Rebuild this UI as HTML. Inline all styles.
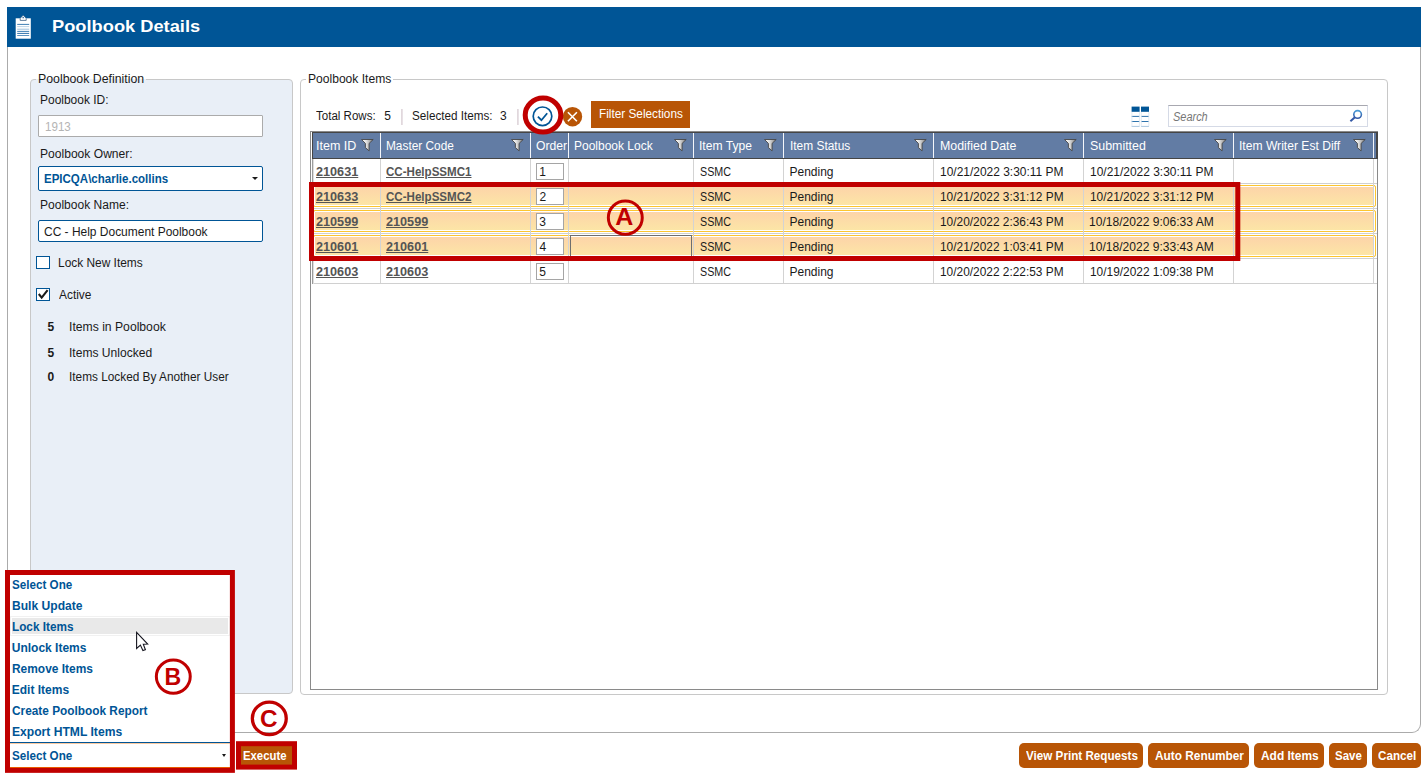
<!DOCTYPE html>
<html lang="en"><head><meta charset="utf-8"><title>Poolbook Details</title>
<style>
html,body{margin:0;padding:0;background:#fff;}
body{width:1428px;height:776px;position:relative;overflow:hidden;font-family:"Liberation Sans",sans-serif;font-size:12px;color:#1a1a1a;}
.a{position:absolute;box-sizing:border-box;}
svg{position:absolute;overflow:visible;}
.t{position:absolute;transform-origin:0 50%;white-space:nowrap;line-height:16px;font-size:12px;color:#1a1a1a;z-index:5;}
.title{font-size:17px;font-weight:bold;color:#fff;line-height:24px;}
.b{font-weight:bold;}
.bb{font-weight:bold;color:#005596;}
.w{color:#fff;}
.wb{color:#fff;font-weight:bold;}
.dis{color:#b4b4b4;}
.srch{font-style:italic;color:#767676;}
.lnk{font-weight:bold;color:#555;text-decoration:underline;text-underline-offset:1px;}
/* frame */
#hdr{left:7px;top:7px;width:1414px;height:40px;background:#005596;}
#frame{left:7px;top:47px;width:1414px;height:686px;border:1px solid #ababab;border-top:none;border-radius:0 0 9px 0;}
/* group boxes */
.gb{border:1px solid #c8c8c8;border-radius:4px;}
#gbL{left:30px;top:79px;width:263px;height:615px;background:#e9eff7;}
#gbR{left:300px;top:79px;width:1088px;height:616px;background:#fff;}
.patch{height:3px;top:78px;}
/* inputs */
.inp{background:#fff;border:1px solid #ababab;border-radius:1px;}
.inpb{background:#fff;border:1px solid #005596;border-radius:2px;}
.cb{width:14px;height:13px;background:#fff;border:1px solid #005596;}
.arrow{width:0;height:0;border-left:3px solid transparent;border-right:3px solid transparent;border-top:3px solid #1a1a1a;}
/* toolbar */
.sep{width:2px;background:linear-gradient(90deg,#ddd3d8,#ece6ea);}
#fbtn{left:591px;top:101px;width:99px;height:27px;background:#b85506;}
#search{left:1168px;top:105px;width:200px;height:22px;border:1px solid #d5dae6;border-top-color:#a8a8b0;background:#fff;}
/* grid */
#grid{left:310px;top:131px;width:1068px;height:559px;border:1px solid #8a8a8a;background:#fff;}
#ghead{left:312px;top:132px;width:1066px;height:27px;background:#627ca4;border:1px solid #454545;border-right-width:2px;}
.cdiv{top:133px;width:1px;height:25px;background:#f4f6fa;}
.row{left:313px;width:1064px;height:25px;border-bottom:1px solid #d0d0d0;}
.sel::before{content:'';position:absolute;box-sizing:border-box;left:0px;right:1px;top:1px;bottom:1px;border:1px solid #fcc52f;border-radius:2px;background:linear-gradient(#fdd3a9,#fce6a6);box-shadow:inset 0 0 0 1px #fff;}
.vline{top:159px;width:1px;height:124px;background:#d3d3d3;}
.oi{left:536px;width:28px;height:17px;background:#fff;border:1px solid #a5a5a5;}
/* bottom */
.btn{top:743px;height:25px;background:#b85506;border-radius:5px;}
#ddlist{left:8px;top:573px;width:225px;height:170px;background:#fff;border:1px solid #c0c0c0;}
#ddhl{left:10px;top:616px;width:220px;height:20px;background:#e9e9e9;border:1px solid #f1f1f1;box-shadow:inset 0 0 0 1px #fff;}
#ddcombo{left:8px;top:742px;width:225px;height:27px;background:#fff;border:1px solid #005596;}
#exe{left:240px;top:744px;width:53px;height:23px;background:#b85506;}
#anno{left:0;top:0;z-index:10;}

</style></head>
<body>
<div class="a" id="frame"></div>
<div class="a" id="hdr"></div>
<svg id="clip" style="left:14px;top:14px" width="20" height="27" viewBox="0 0 20 27">
  <path d="M6.3 6.2 V4.4 Q6.3 3.6 7.2 3.4 Q8.2 1.6 9.2 1.6 Q10.2 1.6 11.2 3.4 Q12.1 3.6 12.1 4.4 V6.2 Z" fill="#fff" stroke="#1d4f7c" stroke-width="0.6"/>
  <circle cx="9.2" cy="3.9" r="0.9" fill="#2a5f90"/>
  <rect x="1.7" y="4.3" width="15.1" height="20.4" fill="#fff"/>
  <path d="M6.2 4.3 V6.4 H12.2 V4.3" fill="none" stroke="#3a5f85" stroke-width="0.8"/>
  <g stroke="#3f7fb3" stroke-width="1">
    <line x1="3.2" y1="10.4" x2="15.2" y2="10.4"/>
    <line x1="3.2" y1="12.6" x2="15.2" y2="12.6" stroke="#bcd3e6"/>
    <line x1="3.2" y1="15.2" x2="15.2" y2="15.2" stroke="#9fc0db"/>
    <line x1="3.2" y1="17.4" x2="15.2" y2="17.4"/>
    <line x1="3.2" y1="19.4" x2="15.2" y2="19.4" stroke="#2f72aa"/>
    <line x1="3.2" y1="21.5" x2="15.2" y2="21.5" stroke="#5c93c0"/>
  </g>
</svg>

<!-- left group box -->
<div class="a gb" id="gbL"></div>
<div class="a patch" style="left:36px;width:110px;background:linear-gradient(#fff 0 1px,#e9eff7 1px)"></div>
<div class="a inp" style="left:38px;top:115px;width:225px;height:22px"></div>
<div class="a inpb" style="left:38px;top:166px;width:225px;height:25px"></div>
<div class="a arrow" style="left:252px;top:177px"></div>
<div class="a inpb" style="left:38px;top:220px;width:225px;height:22px"></div>
<div class="a cb" style="left:36px;top:256px"></div>
<div class="a cb" style="left:36px;top:288px"></div>
<svg style="left:36px;top:288px" width="14" height="13" viewBox="0 0 14 13"><path d="M2.8 6 L5.7 9.6 L11.6 2.2" fill="none" stroke="#1a1a1a" stroke-width="2.1"/></svg>

<!-- right group box -->
<div class="a gb" id="gbR"></div>
<div class="a patch" style="left:306px;width:87px;background:#fff"></div>
<div class="a sep" style="left:401px;top:109px;height:16px"></div>
<div class="a sep" style="left:517px;top:109px;height:16px"></div>
<svg style="left:530px;top:104px" width="56" height="26" viewBox="530 104 56 26">
  <circle cx="542.5" cy="116.3" r="9.3" fill="#fff" stroke="#005596" stroke-width="1.7"/>
  <path d="M537.9 116.7 L541.4 120.2 L547.2 113.2" fill="none" stroke="#005596" stroke-width="1.8"/>
  <circle cx="572.5" cy="116.7" r="9.7" fill="#b85506"/>
  <path d="M567.9 112.2 L576.9 121.3 M576.9 112.2 L567.9 121.3" fill="none" stroke="#fff" stroke-width="1.6"/>
</svg>
<div class="a" id="fbtn"></div>
<svg style="left:1131px;top:106px" width="19" height="21" viewBox="0 0 19 21">
  <rect x="0.6" y="0.6" width="8" height="5.2" fill="#005596"/>
  <rect x="10" y="0.6" width="8" height="5.2" fill="#005596"/>
  <g stroke="#2f74ad" stroke-width="1"><line x1="0.6" y1="10.4" x2="8.6" y2="10.4"/><line x1="10" y1="10.4" x2="18" y2="10.4"/><line x1="0.6" y1="15.5" x2="8.6" y2="15.5"/><line x1="10" y1="15.5" x2="18" y2="15.5"/></g>
  <g stroke="#a9c6df" stroke-width="1"><line x1="0.6" y1="20.4" x2="8.6" y2="20.4"/><line x1="10" y1="20.4" x2="18" y2="20.4"/></g>
  <g stroke="#dbe7f2" stroke-width="0.8" fill="none"><path d="M0.9 6 V20.4 M8.4 6 V20.4 M10.3 6 V20.4 M17.8 6 V20.4"/></g>
</svg>
<div class="a" id="search"></div>
<svg style="left:1348px;top:108px" width="16" height="16" viewBox="1348 108 16 16">
  <defs><linearGradient id="mg" x1="0" y1="0" x2="0" y2="1"><stop offset="0" stop-color="#4a9ad6"/><stop offset="1" stop-color="#3458a6"/></linearGradient></defs>
  <circle cx="1357.6" cy="114.4" r="3.8" fill="#fff" stroke="url(#mg)" stroke-width="1.6"/>
  <path d="M1354.9 117.2 L1350.4 121.3" stroke="#3458a6" stroke-width="1.9" fill="none"/>
</svg>

<!-- grid -->
<div class="a" id="grid"></div>
<div class="a" id="ghead"></div>
<div class="a cdiv" style="left:380px"></div>
<div class="a cdiv" style="left:530px"></div>
<div class="a cdiv" style="left:568px"></div>
<div class="a cdiv" style="left:693px"></div>
<div class="a cdiv" style="left:783px"></div>
<div class="a cdiv" style="left:933px"></div>
<div class="a cdiv" style="left:1083px"></div>
<div class="a cdiv" style="left:1233px"></div>
<div class="a cdiv" style="left:1373px"></div>
<div class="a row" style="top:159px"></div>
<div class="a row sel" style="top:184px"></div>
<div class="a row sel" style="top:209px"></div>
<div class="a row sel" style="top:234px"></div>
<div class="a row" style="top:259px"></div>
<div class="a vline" style="left:380px"></div>
<div class="a vline" style="left:530px"></div>
<div class="a vline" style="left:568px"></div>
<div class="a vline" style="left:693px"></div>
<div class="a vline" style="left:783px"></div>
<div class="a vline" style="left:933px"></div>
<div class="a vline" style="left:1083px"></div>
<div class="a vline" style="left:1233px"></div>
<div class="a vline" style="left:1373px"></div>
<div class="a oi" style="top:163px"></div>
<div class="a oi" style="top:188px"></div>
<div class="a oi" style="top:213px"></div>
<div class="a oi" style="top:238px"></div>
<div class="a oi" style="top:263px"></div>
<div class="a" style="left:312px;top:159px;width:1px;height:125px;background:#9c9c9c"></div>
<div class="a" style="left:313px;top:159px;width:1px;height:125px;background:#dedede"></div>
<div class="a" style="left:570px;top:235px;width:122px;height:23px;border:1px solid #6e6e6e;border-bottom:none"></div>
<svg width="0" height="0" style="left:0;top:0"><defs><linearGradient id="fg" x1="0" y1="0" x2="1" y2="0"><stop offset="0" stop-color="#fff"/><stop offset="0.4" stop-color="#e4e4e4"/><stop offset="1" stop-color="#7c7c7c"/></linearGradient></defs></svg>
<svg style="left:361px;top:139px" width="13" height="13" viewBox="0 0 13 13"><path d="M0.5 0.5 H12.2 L8.1 4.4 V11.9 L4.4 8.6 V4.4 Z" fill="url(#fg)" stroke="#454545" stroke-width="0.9" stroke-linejoin="miter"/></svg>
<svg style="left:511px;top:139px" width="13" height="13" viewBox="0 0 13 13"><path d="M0.5 0.5 H12.2 L8.1 4.4 V11.9 L4.4 8.6 V4.4 Z" fill="url(#fg)" stroke="#454545" stroke-width="0.9" stroke-linejoin="miter"/></svg>
<svg style="left:674px;top:139px" width="13" height="13" viewBox="0 0 13 13"><path d="M0.5 0.5 H12.2 L8.1 4.4 V11.9 L4.4 8.6 V4.4 Z" fill="url(#fg)" stroke="#454545" stroke-width="0.9" stroke-linejoin="miter"/></svg>
<svg style="left:764px;top:139px" width="13" height="13" viewBox="0 0 13 13"><path d="M0.5 0.5 H12.2 L8.1 4.4 V11.9 L4.4 8.6 V4.4 Z" fill="url(#fg)" stroke="#454545" stroke-width="0.9" stroke-linejoin="miter"/></svg>
<svg style="left:914px;top:139px" width="13" height="13" viewBox="0 0 13 13"><path d="M0.5 0.5 H12.2 L8.1 4.4 V11.9 L4.4 8.6 V4.4 Z" fill="url(#fg)" stroke="#454545" stroke-width="0.9" stroke-linejoin="miter"/></svg>
<svg style="left:1064px;top:139px" width="13" height="13" viewBox="0 0 13 13"><path d="M0.5 0.5 H12.2 L8.1 4.4 V11.9 L4.4 8.6 V4.4 Z" fill="url(#fg)" stroke="#454545" stroke-width="0.9" stroke-linejoin="miter"/></svg>
<svg style="left:1214px;top:139px" width="13" height="13" viewBox="0 0 13 13"><path d="M0.5 0.5 H12.2 L8.1 4.4 V11.9 L4.4 8.6 V4.4 Z" fill="url(#fg)" stroke="#454545" stroke-width="0.9" stroke-linejoin="miter"/></svg>
<svg style="left:1353px;top:139px" width="13" height="13" viewBox="0 0 13 13"><path d="M0.5 0.5 H12.2 L8.1 4.4 V11.9 L4.4 8.6 V4.4 Z" fill="url(#fg)" stroke="#454545" stroke-width="0.9" stroke-linejoin="miter"/></svg>
<!-- bottom -->
<div class="a btn" style="left:1019px;width:124px"></div>
<div class="a btn" style="left:1148px;width:101px"></div>
<div class="a btn" style="left:1254px;width:70px"></div>
<div class="a btn" style="left:1329px;width:38px"></div>
<div class="a btn" style="left:1372px;width:49px"></div>
<div class="a" id="ddlist"></div>
<div class="a" id="ddhl"></div>
<div class="a" id="ddcombo"></div>
<div class="a arrow" style="left:222px;top:754px;border-left-width:2.5px;border-right-width:2.5px"></div>
<div class="a" style="left:10px;top:743px;width:220px;height:1px;background:#f9c9a0"></div>
<div class="a" style="left:10px;top:767px;width:220px;height:1px;background:#f06a00"></div>
<div class="a" id="exe"></div>
<!-- annotations -->
<svg id="anno" width="1428" height="776" viewBox="0 0 1428 776">
  <g fill="none" stroke="#c00000">
    <ellipse cx="543" cy="115.1" rx="17.8" ry="17" stroke-width="5"/>
    <rect x="311.5" y="184.5" width="926.3" height="74" stroke-width="5"/>
    <ellipse cx="625.3" cy="217.65" rx="16.95" ry="16.6" stroke-width="3"/>
    <rect x="7.5" y="572.5" width="224.9" height="197.85" stroke-width="5"/>
    <ellipse cx="173.3" cy="676.6" rx="16.95" ry="16.6" stroke-width="3"/>
    <rect x="238.5" y="743.7" width="56" height="23.4" stroke-width="5"/>
    <ellipse cx="269.3" cy="718.4" rx="16.95" ry="16.3" stroke-width="3.3"/>
  </g>
  <g fill="#c00000" font-family="Liberation Sans, sans-serif" font-weight="bold" font-size="23.6px" text-anchor="middle">
    <text transform="translate(624.3 225.2) scale(1.06 1)">A</text>
    <text transform="translate(172.9 685) scale(0.98 1)">B</text>
    <text transform="translate(268.7 726.9) scale(1.03 1)">C</text>
  </g>
  <path d="M136.6 632.3 V648.5 L140.4 645.1 L142.9 650.6 L145.4 649.7 L143.3 644.3 L147.7 644 Z" fill="#fff" stroke="#15151f" stroke-width="1.1" stroke-linejoin="miter"/>
</svg>

<div id="texts">
<span class="t title" style="left:51.66px;top:15px;transform:scaleX(1.0743);">Poolbook Details</span>
<span class="t lg lgL" style="left:38.17px;top:71px;transform:scaleX(1.0270);">Poolbook Definition</span>
<span class="t " style="left:40.30px;top:92px;transform:scaleX(0.9978);">Poolbook ID:</span>
<span class="t dis" style="left:44.53px;top:119px;transform:scaleX(0.9663);">1913</span>
<span class="t " style="left:40.29px;top:146px;transform:scaleX(1.0067);">Poolbook Owner:</span>
<span class="t bb" style="left:43.78px;top:171px;transform:scaleX(0.9591);">EPICQA\charlie.collins</span>
<span class="t " style="left:40.30px;top:197px;transform:scaleX(1.0029);">Poolbook Name:</span>
<span class="t " style="left:44.00px;top:224px;transform:scaleX(0.9969);">CC - Help Document Poolbook</span>
<span class="t " style="left:57.91px;top:255px;transform:scaleX(0.9929);">Lock New Items</span>
<span class="t " style="left:58.90px;top:287px;transform:scaleX(0.9922);">Active</span>
<span class="t b" style="left:47.38px;top:319px;">5</span>
<span class="t " style="left:68.89px;top:319px;transform:scaleX(1.0143);">Items in Poolbook</span>
<span class="t b" style="left:47.38px;top:345px;">5</span>
<span class="t " style="left:68.89px;top:345px;transform:scaleX(1.0062);">Items Unlocked</span>
<span class="t b" style="left:47.38px;top:369px;">0</span>
<span class="t " style="left:68.91px;top:369px;transform:scaleX(0.9851);">Items Locked By Another User</span>
<span class="t lg lgR" style="left:308.29px;top:71px;transform:scaleX(1.0068);">Poolbook Items</span>
<span class="t " style="left:315.66px;top:108px;transform:scaleX(0.9613);">Total Rows:</span>
<span class="t " style="left:384.27px;top:108px;">5</span>
<span class="t " style="left:412.21px;top:108px;transform:scaleX(0.9748);">Selected Items:</span>
<span class="t " style="left:500.12px;top:108px;">3</span>
<span class="t w" style="left:598.52px;top:106px;transform:scaleX(0.9821);">Filter Selections</span>
<span class="t srch" style="left:1173.27px;top:109px;transform:scaleX(0.9128);">Search</span>
<span class="t w" style="left:315.76px;top:138px;transform:scaleX(1.0432);">Item ID</span>
<span class="t w" style="left:385.71px;top:138px;transform:scaleX(0.9874);">Master Code</span>
<span class="t w" style="left:536.09px;top:138px;transform:scaleX(1.0133);">Order</span>
<span class="t w" style="left:574.00px;top:138px;">Poolbook Lock</span>
<span class="t w" style="left:699.09px;top:138px;transform:scaleX(1.0078);">Item Type</span>
<span class="t w" style="left:789.51px;top:138px;transform:scaleX(0.9924);">Item Status</span>
<span class="t w" style="left:939.57px;top:138px;transform:scaleX(1.0317);">Modified Date</span>
<span class="t w" style="left:1089.78px;top:138px;transform:scaleX(1.0332);">Submitted</span>
<span class="t w" style="left:1239.39px;top:138px;transform:scaleX(1.0086);">Item Writer Est Diff</span>
<span class="t lnk" style="left:316.17px;top:164px;transform:scaleX(1.0548);">210631</span>
<span class="t lnk" style="left:386.22px;top:164px;transform:scaleX(0.9641);">CC-HelpSSMC1</span>
<span class="t " style="left:539.20px;top:164px;">1</span>
<span class="t " style="left:699.85px;top:164px;transform:scaleX(0.8948);">SSMC</span>
<span class="t " style="left:789.50px;top:164px;">Pending</span>
<span class="t " style="left:939.60px;top:164px;transform:scaleX(0.9967);">10/21/2022 3:30:11 PM</span>
<span class="t " style="left:1089.50px;top:164px;transform:scaleX(0.9967);">10/21/2022 3:30:11 PM</span>
<span class="t lnk" style="left:316.17px;top:189px;transform:scaleX(1.0548);">210633</span>
<span class="t lnk" style="left:386.22px;top:189px;transform:scaleX(0.9641);">CC-HelpSSMC2</span>
<span class="t " style="left:539.45px;top:189px;">2</span>
<span class="t " style="left:699.85px;top:189px;transform:scaleX(0.8948);">SSMC</span>
<span class="t " style="left:789.50px;top:189px;">Pending</span>
<span class="t " style="left:939.61px;top:189px;transform:scaleX(0.9906);">10/21/2022 3:31:12 PM</span>
<span class="t " style="left:1089.51px;top:189px;transform:scaleX(0.9906);">10/21/2022 3:31:12 PM</span>
<span class="t lnk" style="left:316.17px;top:214px;transform:scaleX(1.0548);">210599</span>
<span class="t lnk" style="left:386.17px;top:214px;transform:scaleX(1.0548);">210599</span>
<span class="t " style="left:539.33px;top:214px;">3</span>
<span class="t " style="left:699.85px;top:214px;transform:scaleX(0.8948);">SSMC</span>
<span class="t " style="left:789.50px;top:214px;">Pending</span>
<span class="t " style="left:939.61px;top:214px;transform:scaleX(0.9906);">10/20/2022 2:36:43 PM</span>
<span class="t " style="left:1089.49px;top:214px;transform:scaleX(1.0053);">10/18/2022 9:06:33 AM</span>
<span class="t lnk" style="left:316.17px;top:239px;transform:scaleX(1.0548);">210601</span>
<span class="t lnk" style="left:386.17px;top:239px;transform:scaleX(1.0548);">210601</span>
<span class="t " style="left:539.45px;top:239px;">4</span>
<span class="t " style="left:699.85px;top:239px;transform:scaleX(0.8948);">SSMC</span>
<span class="t " style="left:789.50px;top:239px;">Pending</span>
<span class="t " style="left:939.61px;top:239px;transform:scaleX(0.9906);">10/21/2022 1:03:41 PM</span>
<span class="t " style="left:1089.49px;top:239px;transform:scaleX(1.0053);">10/18/2022 9:33:43 AM</span>
<span class="t lnk" style="left:316.17px;top:264px;transform:scaleX(1.0548);">210603</span>
<span class="t lnk" style="left:386.17px;top:264px;transform:scaleX(1.0548);">210603</span>
<span class="t " style="left:539.33px;top:264px;">5</span>
<span class="t " style="left:699.85px;top:264px;transform:scaleX(0.8948);">SSMC</span>
<span class="t " style="left:789.50px;top:264px;">Pending</span>
<span class="t " style="left:939.61px;top:264px;transform:scaleX(0.9906);">10/20/2022 2:22:53 PM</span>
<span class="t " style="left:1089.51px;top:264px;transform:scaleX(0.9906);">10/19/2022 1:09:38 PM</span>
<span class="t bb" style="left:12.01px;top:577px;transform:scaleX(0.9714);">Select One</span>
<span class="t bb" style="left:11.75px;top:598px;transform:scaleX(1.0065);">Bulk Update</span>
<span class="t bb" style="left:11.76px;top:619px;transform:scaleX(0.9805);">Lock Items</span>
<span class="t bb" style="left:11.75px;top:640px;">Unlock Items</span>
<span class="t bb" style="left:11.75px;top:661px;transform:scaleX(0.9944);">Remove Items</span>
<span class="t bb" style="left:11.75px;top:682px;">Edit Items</span>
<span class="t bb" style="left:12.01px;top:703px;transform:scaleX(0.9865);">Create Poolbook Report</span>
<span class="t bb" style="left:11.74px;top:724px;transform:scaleX(1.0093);">Export HTML Items</span>
<span class="t bb" style="left:12.01px;top:748px;transform:scaleX(0.9714);">Select One</span>
<span class="t wb" style="left:243.29px;top:748px;transform:scaleX(0.9444);">Execute</span>
<span class="t wb" style="left:1026.00px;top:748px;transform:scaleX(0.9717);">View Print Requests</span>
<span class="t wb" style="left:1154.65px;top:748px;transform:scaleX(0.9877);">Auto Renumber</span>
<span class="t wb" style="left:1261.05px;top:748px;transform:scaleX(0.9939);">Add Items</span>
<span class="t wb" style="left:1335.12px;top:748px;transform:scaleX(0.9578);">Save</span>
<span class="t wb" style="left:1378.31px;top:748px;transform:scaleX(0.9711);">Cancel</span>
</div>
</body></html>
